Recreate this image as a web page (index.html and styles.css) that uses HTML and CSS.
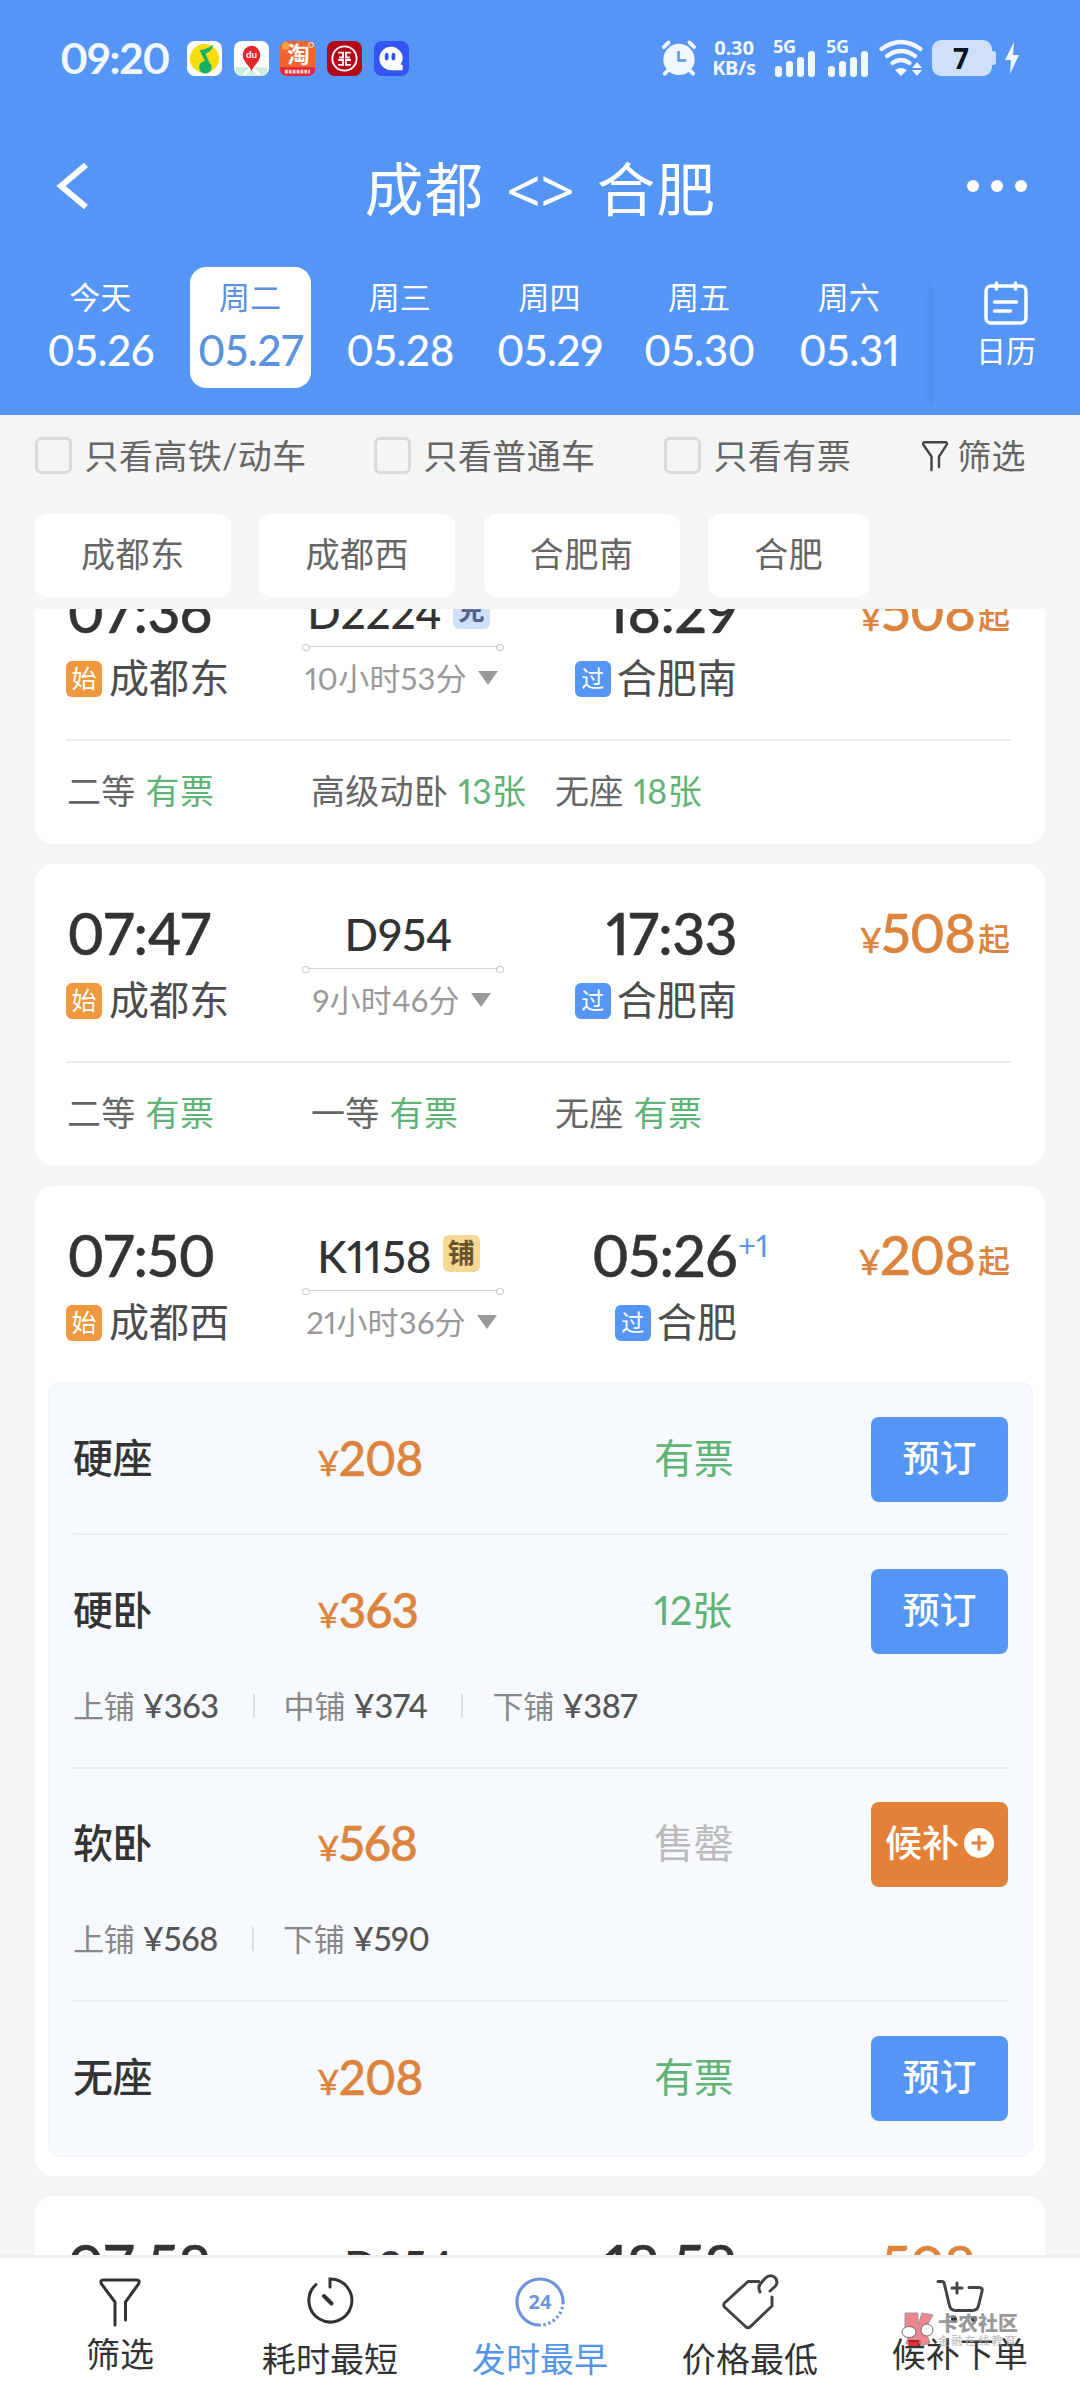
FILE: index.html
```html
<!DOCTYPE html>
<html lang="zh-CN">
<head>
<meta charset="utf-8">
<title>成都 - 合肥</title>
<link rel="stylesheet" href="styles.css">
</head>
<body>
<div class="screen">
  <header class="header">
    <div class="status">
      <span class="clock">09:20</span>
      <div class="apps">
        <svg class="app" viewBox="0 0 36 36"><rect width="36" height="36" rx="8" fill="#fdfefb"/><circle cx="18" cy="18" r="15" fill="#f9dc0c"/><path d="M13 9.500c5-1 9-2 14-6-1 5-4 8-8 9.500l4 9a6.500 6.500 0 1 1-4.500-1.500z" fill="#12b262"/></svg>
        <svg class="app" viewBox="0 0 36 36"><rect width="36" height="36" rx="8" fill="#fff"/><path d="M2 27h32v3q0 6-7 6H9q-7 0-7-6z" fill="#cdeedd"/><path d="M10 35l8-8 8 8" stroke="#fff" stroke-width="3" fill="none"/><path d="M18 31c-2-6-9-9-9-17a9 9 0 0 1 18 0c0 8-7 11-9 17z" fill="#e2262b"/><text x="18" y="17" class="app-du">du</text></svg>
        <svg class="app" viewBox="0 0 36 36"><rect width="36" height="36" rx="8" fill="#f0652f"/><path d="M0 27h36v1q0 8-8 8H8q-8 0-8-8z" fill="#e3263a"/><circle cx="6" cy="5" r="4" fill="#f9a13a"/><circle cx="32" cy="4" r="2.500" fill="none" stroke="#fff" stroke-width="1"/><text x="19" y="23" class="app-tao">淘</text><path d="M5 31.500h26" stroke="#ffd5ce" stroke-width="4" stroke-dasharray="3 1"/></svg>
        <svg class="app" viewBox="0 0 36 36"><rect width="36" height="36" rx="8" fill="#b3081a"/><g fill="none" stroke="#fff" stroke-width="1.900"><circle cx="18" cy="18" r="12.500"/><path d="M11.500 12h5v5h-4M11.500 19.500h5v5h-5M24.500 12h-5v5h4M24.500 19.500h-5v5h5"/></g></svg>
        <svg class="app" viewBox="0 0 36 36"><rect width="36" height="36" rx="8" fill="#3455f2"/><path d="M17.500 6a12 12 0 0 1 12 12q0 3-2 6l2 1v5h-12a12 12 0 0 1 0-24z" fill="#fff"/><ellipse cx="13" cy="16" rx="2" ry="4" fill="#3455f2"/><ellipse cx="20" cy="16" rx="2" ry="4" fill="#3455f2"/></svg>
      </div>
      <div class="indicators">
        <svg class="alarm" viewBox="0 0 38 38"><g fill="none" stroke="#f1f7ff" stroke-width="4" stroke-linecap="round"><path d="M3 7l5-5M35 7l-5-5M8 31l-4 4M30 31l4 4"/></g><circle cx="19" cy="20" r="16.500" fill="#f1f7ff"/><path d="M18.500 11v10h8" fill="none" stroke="#5595f6" stroke-width="2.600"/></svg>
        <div class="rate"><span>0.30</span><span>KB/s</span></div>
        <div class="signal"><span>5G</span><svg viewBox="0 0 42 26"><g fill="#f1f7ff"><rect x="0" y="15" width="7" height="11" rx="3"/><rect x="11" y="10" width="7" height="16" rx="3"/><rect x="22" y="6" width="7" height="20" rx="3"/><rect x="33" y="0" width="7" height="26" rx="3"/></g></svg></div>
        <div class="signal"><span>5G</span><svg viewBox="0 0 42 26"><g fill="#f1f7ff"><rect x="0" y="15" width="7" height="11" rx="3"/><rect x="11" y="10" width="7" height="16" rx="3"/><rect x="22" y="6" width="7" height="20" rx="3"/><rect x="33" y="0" width="7" height="26" rx="3"/></g></svg></div>
        <svg class="wifi" viewBox="0 0 44 36"><g fill="none" stroke="#f1f7ff" stroke-width="4.200" stroke-linecap="round"><path d="M2.500 9q19.500-14 39 0M8 16q14-10 28 0M13.500 23q8.500-6 17 0"/></g><path d="M22 36l-6-6q6-4 12 0zM38 22l5 6H33zM38 36l5-6H33z" fill="#f1f7ff"/></svg>
        <div class="battery"><span>7</span></div>
        <svg class="bolt" viewBox="0 0 14 32"><path d="M9 0L0 18h6l-1 14 9-19H8z" fill="#f1f7ff"/></svg>
      </div>
    </div>
    <div class="titlebar">
      <svg class="back" viewBox="0 0 32 46"><path d="M29 2L4 23l25 21" fill="none" stroke="#fff" stroke-width="6"/></svg>
      <h1><span>成都</span><span class="swapsign">&lt;&gt;</span><span>合肥</span></h1>
      <svg class="more" viewBox="0 0 60 12"><circle cx="6" cy="6" r="6" fill="#fff"/><circle cx="30" cy="6" r="6" fill="#fff"/><circle cx="54" cy="6" r="6" fill="#fff"/></svg>
    </div>
    <div class="datebar">
      <div class="dates">
        <div class="date"><span>今天</span><b>05.26</b></div>
        <div class="date active"><span>周二</span><b>05.27</b></div>
        <div class="date"><span>周三</span><b>05.28</b></div>
        <div class="date"><span>周四</span><b>05.29</b></div>
        <div class="date"><span>周五</span><b>05.30</b></div>
        <div class="date"><span>周六</span><b>05.31</b></div>
      </div>
      <div class="calendar">
        <svg viewBox="0 0 44 44"><g fill="none" stroke="#fff" stroke-width="3.400" stroke-linecap="round"><rect x="2" y="5" width="40" height="37" rx="5"/><path d="M12.500 2v6M31.500 2v6M10.500 21h22M10.500 30h16"/></g></svg>
        <span>日历</span>
      </div>
    </div>
  </header>

  <div class="filters">
    <label class="check c1"><i></i>只看高铁/动车</label>
    <label class="check c2"><i></i>只看普通车</label>
    <label class="check c3"><i></i>只看有票</label>
    <div class="sift"><svg viewBox="0 0 26 30"><path d="M9.500 29V15.500L1.500 4Q0 1.300 3 1.300h20q3 0 1.500 2.700L17 15.500V26" fill="none" stroke="#444" stroke-width="2.400" stroke-linecap="round"/></svg>筛选</div>
  </div>
  <div class="chips"><span>成都东</span><span>成都西</span><span>合肥南</span><span>合肥</span></div>

  <main class="list">
    <section class="card first">
      <div class="train">
        <div class="from"><div class="time">07:36</div><div class="station"><i class="tag start">始</i>成都东</div></div>
        <div class="mid"><div class="code">D2224<i class="mark swap">兑</i></div><div class="track"></div><div class="dur">10小时53分<i></i></div></div>
        <div class="to"><div class="time">18:29</div><div class="station"><i class="tag pass">过</i>合肥南</div></div>
        <div class="price"><small>¥</small>508<em>起</em></div>
      </div>
      <div class="seats"><span>二等 <b>有票</b></span><span>高级动卧 <b>13张</b></span><span>无座 <b>18张</b></span></div>
    </section>

    <section class="card">
      <div class="train">
        <div class="from"><div class="time">07:47</div><div class="station"><i class="tag start">始</i>成都东</div></div>
        <div class="mid"><div class="code">D954</div><div class="track"></div><div class="dur">9小时46分<i></i></div></div>
        <div class="to"><div class="time">17:33</div><div class="station"><i class="tag pass">过</i>合肥南</div></div>
        <div class="price"><small>¥</small>508<em>起</em></div>
      </div>
      <div class="seats"><span>二等 <b>有票</b></span><span>一等 <b>有票</b></span><span>无座 <b>有票</b></span></div>
    </section>

    <section class="card open">
      <div class="train">
        <div class="from"><div class="time">07:50</div><div class="station"><i class="tag start">始</i>成都西</div></div>
        <div class="mid"><div class="code">K1158<i class="mark berth">铺</i></div><div class="track"></div><div class="dur">21小时36分<i></i></div></div>
        <div class="to"><div class="time">05:26<sup>+1</sup></div><div class="station"><i class="tag pass">过</i>合肥</div></div>
        <div class="price"><small>¥</small>208<em>起</em></div>
      </div>
      <div class="panel">
        <div class="row">
          <div class="offer"><span class="kind">硬座</span><span class="fare"><small>¥</small>208</span><span class="left">有票</span><span class="btn">预订</span></div>
        </div>
        <div class="row">
          <div class="offer"><span class="kind">硬卧</span><span class="fare"><small>¥</small>363</span><span class="left">12张</span><span class="btn">预订</span></div>
          <div class="berths"><span>上铺<b>¥363</b></span><span>中铺<b>¥374</b></span><span>下铺<b>¥387</b></span></div>
        </div>
        <div class="row">
          <div class="offer"><span class="kind">软卧</span><span class="fare"><small>¥</small>568</span><span class="left sold">售罄</span><span class="btn wait">候补<svg viewBox="0 0 30 30"><circle cx="15" cy="15" r="15" fill="#fff"/><path d="M15 7.500v15M7.500 15h15" stroke="#e38139" stroke-width="3"/></svg></span></div>
          <div class="berths"><span>上铺<b>¥568</b></span><span>下铺<b>¥590</b></span></div>
        </div>
        <div class="row">
          <div class="offer"><span class="kind">无座</span><span class="fare"><small>¥</small>208</span><span class="left">有票</span><span class="btn">预订</span></div>
        </div>
      </div>
    </section>

    <section class="card">
      <div class="train">
        <div class="from"><div class="time">07:58</div></div>
        <div class="mid"><div class="code">D354</div></div>
        <div class="to"><div class="time">18:58</div></div>
        <div class="price"><small>¥</small>508<em>起</em></div>
      </div>
    </section>
  </main>

  <nav class="nav">
    <div class="tab short"><svg viewBox="0 0 56 56"><path d="M23 51V28L9.500 10Q7.500 6 11.500 6h33q4 0 2 4L33.500 28v18" fill="none" stroke="#333" stroke-width="3" stroke-linecap="round"/></svg><span>筛选</span></div>
    <div class="tab"><svg viewBox="0 0 56 56"><g fill="none" stroke="#333" stroke-width="3" stroke-linecap="round"><path d="M14 10.500A21.500 21.500 0 1 0 28 5v8"/><path d="M22 22l7.500 7.500" stroke-width="4"/></g></svg><span>耗时最短</span></div>
    <div class="tab on"><svg viewBox="0 0 56 56"><g fill="none" stroke="#6c95de" stroke-width="3.200"><path d="M51 28A23 23 0 1 0 28 51"/><path d="M51 28A23 23 0 0 1 28 51" stroke-dasharray="2.500 2.500"/></g><text x="28" y="35" class="h24">24</text></svg><span>发时最早</span></div>
    <div class="tab"><svg viewBox="0 0 56 56"><g fill="none" stroke="#444" stroke-width="3" stroke-linejoin="round" stroke-linecap="round"><path d="M37 7.500H26L2.500 29Q1 31 2.500 33L24 53q2 1.500 4 0L50 32V23"/><path d="M38 18q-3-6 2-10l3-3.500q5-5 10-1 4 5 0 9l-5 4.500"/></g></svg><span>价格最低</span></div>
    <div class="tab short"><svg viewBox="0 0 56 56"><g fill="none" stroke="#444" stroke-width="3" stroke-linecap="round" stroke-linejoin="round"><path d="M6 7.500h4q2 0 2.500 3l5 21q1 5 6 5h17q5 0 6-5l3.500-14q1-4-3-4H37M25 9v10M20 14h10"/></g><circle cx="22" cy="45" r="3" fill="#333"/><circle cx="42" cy="45" r="3" fill="#333"/></svg><span>候补下单</span></div>
    <div class="stamp">
      <svg viewBox="0 0 34 36"><g fill="#ee6f7c" stroke="#888" stroke-width="1"><path d="M5 1h13v12l4-12 11 2-8 14 5 14-9 3-6-10v8H6l3-10-4-4z"/></g><path d="M9 28h10v6H8z" fill="#d9121c"/><g fill="#fff" stroke="#555" stroke-width="1"><ellipse cx="9" cy="20" rx="7" ry="5.500"/><ellipse cx="27" cy="18" rx="6" ry="6"/></g></svg>
      <div><b>卡农社区</b><span>金融在线教育</span></div>
    </div>
  </nav>
</div>
</body>
</html>
```
FILE: styles.css
```css
* { box-sizing: border-box; margin: 0; padding: 0; }
body {
  background: #f5f5f5;
  font-family: "Lato", "Noto Sans CJK SC", sans-serif;
  font-variant-numeric: proportional-nums;
  color: #333;
}
b, i, em, small { font-weight: inherit; font-style: normal; }
svg { display: block; flex: none; overflow: visible; }
.screen { width: 1080px; height: 2400px; display: flex; flex-direction: column; overflow: hidden; }

/* header */
.header { height: 415px; background: #5595f6; color: #fff; flex: none; }
.status { height: 116px; padding: 0 61px 0 60px; display: flex; align-items: center; }
.clock { font-size: 42.500px; font-weight: 700; line-height: 48px; width: 127px; color: #f1f7ff; white-space: nowrap; letter-spacing: -1.200px; }
.apps { display: flex; gap: 11.700px; }
.app { width: 35px; height: 35px; }
.app-du { font-size: 10px; font-weight: 700; fill: #fff; text-anchor: middle; }
.app-tao { font-size: 23px; font-weight: 700; fill: #fff; text-anchor: middle; }
.indicators { margin-left: auto; display: flex; align-items: center; color: #f1f7ff; font-family: "Noto Sans", sans-serif; font-weight: 700; }
.alarm { width: 36px; height: 37px; margin-right: 13px; }
.rate { width: 48px; display: flex; flex-direction: column; align-items: center; font-size: 20px; line-height: 20px; margin-right: 15px; letter-spacing: -.3px; font-weight: 700; }
.signal { width: 42px; height: 38px; margin-right: 11px; display: flex; flex-direction: column; align-items: flex-start; }
.signal span { font-size: 18px; line-height: 15px; height: 12px; letter-spacing: -.5px; font-weight: 700; }
.signal svg { width: 42px; height: 26px; margin-left: 2px; }
.wifi { width: 44px; height: 36px; margin-right: 9px; }
.battery { position: relative; width: 60px; height: 36px; border-radius: 9px; background: #cfe0fb; color: #0b1220; font-size: 28px; line-height: 36px; text-align: center; padding-right: 2px; margin-right: 13px; }
.battery::after { content: ""; position: absolute; right: -4px; top: 11px; width: 4px; height: 14px; background: #cfe0fb; border-radius: 0 3px 3px 0; }
.bolt { width: 14px; height: 32px; }

.titlebar { height: 143px; padding: 0 53px 3px 57px; display: flex; align-items: center; justify-content: space-between; }
.back { width: 32px; height: 46px; margin-right: 28px; }
.titlebar h1 { display: flex; gap: 22px; font-size: 58.500px; font-weight: 400; line-height: 70px; letter-spacing: 1.200px; padding-top: 3px; margin-left: -3px; }
.swapsign { font-family: "Noto Sans", sans-serif; font-size: 60px; letter-spacing: 0; transform: translateY(2px); }
.more { width: 60px; height: 12px; }

.datebar { height: 156px; display: flex; }
.dates { display: flex; width: 933px; padding: 8px 0 0 25.500px; }
.date { width: 149.700px; height: 121px; display: flex; flex-direction: column; align-items: center; padding-top: 10px; }
.date span { font-size: 31px; line-height: 40px; }
.date b { font-size: 42px; line-height: 50px; margin: 8px 0 0 1px; font-weight: 500; letter-spacing: -.2px; }
.date.active { width: 121px; margin: 0 14.350px; background: #fff; border-radius: 16px; color: #5a93dc; }
.calendar { flex: 1; display: flex; flex-direction: column; align-items: center; padding: 22px 0 0 0; box-shadow: -9px 20px 12px -8px rgba(60, 110, 180, .3); clip-path: inset(20px 0 10px -20px); }
.calendar svg { width: 44px; height: 44px; margin-left: -2px; }
.calendar span { font-size: 30px; line-height: 40px; margin-top: 5px; margin-left: -1px; }

/* filters */
.filters { height: 99px; flex: none; padding: 0 54px 18px 35px; display: flex; align-items: center; color: #666; font-size: 34px; letter-spacing: .4px; white-space: nowrap; }
.check { display: flex; align-items: center; gap: 12.500px; line-height: 44px; }
.check i { width: 37px; height: 37px; border: 3px solid #dadada; border-radius: 6px; }
.c1 { width: 339px; }
.c2 { width: 290px; }
.sift { margin-left: auto; display: flex; align-items: center; gap: 9px; line-height: 44px; }
.sift svg { width: 26px; height: 30px; }
.chips { height: 95px; flex: none; padding: 0 35px; display: flex; gap: 28.600px; }
.chips span { height: 83px; padding: 0 46px; border-radius: 12px; background: #fff; font-size: 34px; line-height: 80px; letter-spacing: .6px; color: #666; }

/* train list */
.list { flex: 1; min-height: 0; overflow: hidden; padding: 0 35px; }
.card { background: #fff; border-radius: 18px; height: 301px; margin-bottom: 21px; }
.card.first { margin-top: -67px; height: 302px; margin-bottom: 20px; }
.card.open { height: 990px; margin-bottom: 20px; }
.train { height: 197px; margin: 0 35px 0 31px; display: grid; grid-template-columns: 236px 202px 232px 1fr; }
.time { font-size: 57px; font-weight: 500; line-height: 60px; margin-top: 39px; white-space: nowrap; position: relative; left: 1px; letter-spacing: -.5px; -webkit-text-stroke: .5px; }
.station { display: flex; align-items: center; gap: 7px; height: 46px; margin-top: 14px; font-size: 40px; line-height: 46px; color: #4d4d4d; letter-spacing: .1px; }
.tag { width: 36px; height: 36px; border-radius: 6px; color: #fff; font-size: 25px; line-height: 34px; text-align: center; letter-spacing: 0; margin-top: 1px; }
.start { background: #ee983f; }
.pass { background: #5595f6; font-size: 23px; }
.to { display: flex; flex-direction: column; align-items: flex-end; }
.to .station { gap: 6px; margin-right: -1px; }
.to sup { position: absolute; left: 100%; top: 2px; margin-left: 1px; font-size: 31px; line-height: 36px; font-weight: 400; color: #5a96ea; -webkit-text-stroke: 0; letter-spacing: 0; }
.mid { display: flex; flex-direction: column; align-items: center; }
.code { margin-top: 43px; height: 54px; display: flex; gap: 11px; font-size: 44px; line-height: 54px; font-weight: 500; white-space: nowrap; margin-left: -9px; }
.mark { width: 37px; height: 37px; border-radius: 6px; margin-top: 7px; font-size: 27px; line-height: 36px; font-weight: 700; text-align: center; }
.swap { background: #cfe0fb; color: #51648c; }
.berth { background: #f6d793; color: #68542c; margin-top: 6px; }
.track { position: relative; width: 190px; height: 1px; background: #d2d2d2; margin-top: 7px; }
.track::before, .track::after { content: ""; position: absolute; top: -2px; width: 6px; height: 5px; border: 1px solid #ccc; border-radius: 50%; }
.track::before { left: -6px; }
.track::after { right: -6px; }
.dur { display: flex; align-items: center; gap: 11px; font-size: 31px; line-height: 40px; margin-top: 11px; color: #999; white-space: nowrap; margin-left: -3px; letter-spacing: .2px; }
.dur i { border: 10px solid transparent; border-top: 14px solid #999; border-bottom: 0; }
.price { justify-self: end; display: flex; align-items: baseline; margin-top: 40px; height: 60px; font-size: 54px; line-height: 58px; font-weight: 500; color: #dc843e; letter-spacing: -1px; -webkit-text-stroke: .5px; }
.price small { font-size: 34px; -webkit-text-stroke: .3px; }
.price em { font-size: 32px; margin-left: 3px; letter-spacing: 0; -webkit-text-stroke: 0; transform: translateY(-2px); }
.seats { display: grid; grid-template-columns: 244px 244px 1fr; margin: 0 34px 0 31px; padding-left: 1px; border-top: 2px solid #ececec; height: 104px; font-size: 34px; line-height: 100px; color: #666; white-space: nowrap; letter-spacing: .3px; }
.seats b { color: #5fb375; margin-left: 1px; }

/* seat offers */
.panel { width: 985px; height: 775px; margin: -1px 0 0 13px; padding: 0 24px; background: #f6f9fd; border: 1px solid #f0f2f6; border-radius: 12px; }
.row { height: 233.600px; border-bottom: 2px solid #eaecef; padding-top: 33.500px; }
.row:first-child { height: 152px; }
.row:last-child { height: 150px; border: 0; }
.offer { display: grid; grid-template-columns: 244px 337px 1fr 137px; grid-template-rows: 85px; height: 85px; line-height: 82px; font-size: 40px; white-space: nowrap; }
.kind { font-weight: 500; letter-spacing: -.4px; }
.fare { font-size: 47.500px; font-weight: 500; color: #dc843e; letter-spacing: -.8px; -webkit-text-stroke: .5px; }
.fare small { font-size: 34px; -webkit-text-stroke: .3px; }
.left { color: #5fb375; letter-spacing: -.2px; }
.left.sold { color: #bbb; }
.btn { display: flex; align-items: center; justify-content: center; gap: 5px; background: #5595f6; color: #fff; border-radius: 8px; font-size: 37px; font-weight: 500; line-height: 80px; padding-bottom: 3px; }
.btn.wait { background: #e38139; }
.btn svg { width: 30px; height: 30px; }
.berths { display: flex; height: 44px; margin-top: 30px; font-size: 31px; line-height: 44px; color: #888; white-space: nowrap; }
.berths b { font-size: 32.500px; color: #555; font-weight: 500; margin-left: 8px; letter-spacing: -.4px; }
.berths span { display: flex; align-items: center; letter-spacing: -.2px; }
.berths span + span::before { content: ""; width: 2px; height: 24px; background: #ddd; margin: 0 29px 0 34px; }

/* bottom tabs */
.nav { position: relative; height: 145px; flex: none; padding: 0 15px; background: #fff; border-top: 3px solid #eee; display: flex; }
.tab { flex: 1; display: flex; flex-direction: column; align-items: center; padding-top: 16px; font-size: 34px; line-height: 44px; color: #333; }
.tab svg { width: 56px; height: 56px; }
.tab span { margin-top: 7px; letter-spacing: .1px; }
.tab.short span { margin-top: 2px; }
.on span { color: #5595e6; }
.h24 { font: 700 20px "Noto Sans", sans-serif; fill: #6c95de; text-anchor: middle; }
.stamp { position: absolute; left: 900px; top: 54px; display: flex; gap: 4px; opacity: .85; }
.stamp svg { width: 34px; height: 36px; }
.stamp div { display: flex; flex-direction: column; color: #888; white-space: nowrap; }
.stamp b { font-size: 20px; line-height: 22px; font-weight: 900; }
.stamp span { font-size: 11px; line-height: 14px; letter-spacing: 2.400px; color: #aaa; }
```
